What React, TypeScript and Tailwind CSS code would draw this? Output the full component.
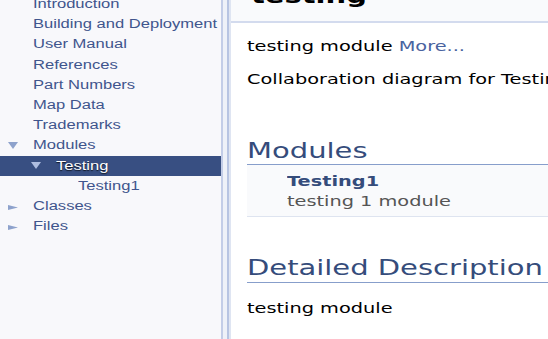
import React from "react";
import clsx from "clsx";

type Item = {
  label: string;
  level: 0 | 1 | 2;
  arrow?: "down" | "right";
  selected?: boolean;
};

const items: Item[] = [
  { label: "Introduction", level: 0 },
  { label: "Building and Deployment", level: 0 },
  { label: "User Manual", level: 0 },
  { label: "References", level: 0 },
  { label: "Part Numbers", level: 0 },
  { label: "Map Data", level: 0 },
  { label: "Trademarks", level: 0 },
  { label: "Modules", level: 0, arrow: "down" },
  { label: "Testing", level: 1, arrow: "down", selected: true },
  { label: "Testing1", level: 2 },
  { label: "Classes", level: 0, arrow: "right" },
  { label: "Files", level: 0, arrow: "right" },
];

const levelPad = ["pl-0", "pl-[23px]", "pl-[45px]"];

function Wide({ children, className }: { children: React.ReactNode; className?: string }) {
  return (
    <span className={clsx("inline-block origin-left scale-x-[1.38] whitespace-nowrap", className)}>
      {children}
    </span>
  );
}

function Arrow({ dir, selected }: { dir: "down" | "right"; selected?: boolean }) {
  if (dir === "down") {
    return (
      <svg width="10" height="7" viewBox="0 0 10 7" className={selected ? "text-[#aebde0]" : "text-[#8ea2cc]"}>
        <path d="M0 0H10L5 7Z" fill="currentColor" />
      </svg>
    );
  }
  return (
    <svg width="10" height="5" viewBox="0 0 10 5" className="mt-[3px] text-[#8ea2cc]">
      <path d="M0 0L10 2.5L0 5Z" fill="currentColor" />
    </svg>
  );
}

export default function App() {
  return (
    <div className="flex h-[339px] w-[548px] overflow-hidden bg-white">
      <nav className="w-[221px] shrink-0 overflow-hidden bg-[#f8f8fb] font-['Liberation_Sans',Arial,sans-serif] text-[12px]">
        <ul className="-mt-[6px]">
          {items.map((it) => (
            <li
              key={it.label}
              className={clsx(
                "flex h-[20.2px] items-center",
                levelPad[it.level],
                it.selected
                  ? "bg-[#384f82] text-white [text-shadow:0_1px_1px_rgba(0,0,0,0.8)]"
                  : "text-[#40558d]"
              )}
            >
              <span className="flex w-[33px] shrink-0 items-center pl-[8px]">
                {it.arrow && <Arrow dir={it.arrow} selected={it.selected} />}
              </span>
              <Wide className="leading-[20px]">{it.label}</Wide>
            </li>
          ))}
        </ul>
      </nav>

      <div className="w-[10px] shrink-0 bg-[linear-gradient(to_right,#c3cde7_0px,#c3cde7_2px,#eef1f8_2px,#eef1f8_6px,#b7c4e2_6px,#b7c4e2_8px,#dfe5f2_8px)]" />

      <main className="min-w-0 flex-1 overflow-hidden font-['DejaVu_Sans',sans-serif] text-[14px] text-black">
        <div className="h-[23px] overflow-hidden border-b-2 border-[#d3dbee] bg-[#f9fafc] pl-[20px]">
          <div className="-mt-[18px] text-[21px] font-bold leading-[28px]">
            <Wide>testing</Wide>
          </div>
        </div>

        <div className="pl-[16px]">
          <p className="mt-[13px] leading-[20px]">
            <Wide>
              testing module <a className="text-[#4a64a0]">More...</a>
            </Wide>
          </p>
          <p className="mt-[13px] leading-[20px]">
            <Wide>Collaboration diagram for Testing:</Wide>
          </p>

          <h2 className="mt-[49px] border-b border-[#879ecb] text-[21px] leading-[26px] text-[#354c7b]">
            <Wide>Modules</Wide>
          </h2>
          <div className="border-b border-[#dee4f0] bg-[#f9fafc] pb-[5px] pl-[40px] pt-[6px]">
            <div className="leading-[20px] font-bold text-[#354c7b]">
              <Wide>Testing1</Wide>
            </div>
            <div className="leading-[20px] text-[#555555]">
              <Wide>testing 1 module</Wide>
            </div>
          </div>

          <h2 className="mt-[38px] border-b border-[#879ecb] pb-[1px] text-[21px] leading-[26px] text-[#354c7b]">
            <Wide>Detailed Description</Wide>
          </h2>
          <p className="mt-[15px] leading-[20px]">
            <Wide>testing module</Wide>
          </p>
        </div>
      </main>
    </div>
  );
}
